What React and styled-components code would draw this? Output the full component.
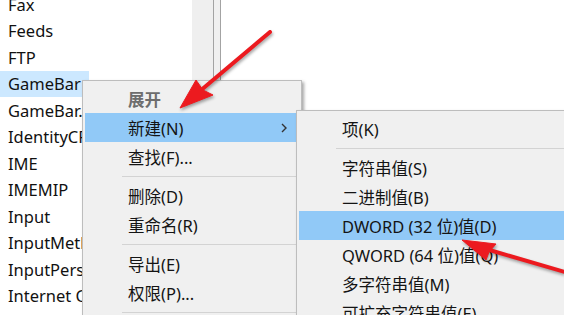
import React from "react";
import styled, { createGlobalStyle } from "styled-components";

const GlobalStyle = createGlobalStyle`
    html, body {
        margin: 0;
        padding: 0;
        background: #ffffff;
        overflow: hidden;
    }
    body {
        font-family: "Noto Sans", "Noto Sans CJK SC", sans-serif;
        font-size: 16.5px;
        color: #1b1b1b;
    }
`;

const treeItems = [
    "Fax",
    "Feeds",
    "FTP",
    "GameBar",
    "GameBar.",
    "IdentityCRL",
    "IME",
    "IMEMIP",
    "Input",
    "InputMethod",
    "InputPersonalization",
    "Internet Connection",
];

const mainMenu = [
    { label: "展开", bold: true, disabled: true },
    { label: "新建(N)", active: true, sub: true },
    { label: "查找(F)..." },
    { sep: true },
    { label: "删除(D)" },
    { label: "重命名(R)" },
    { sep: true },
    { label: "导出(E)" },
    { label: "权限(P)..." },
    { sep: true },
];

const newMenu = [
    { label: "项(K)" },
    { sep: true },
    { label: "字符串值(S)" },
    { label: "二进制值(B)" },
    { label: "DWORD (32 位)值(D)", active: true },
    { label: "QWORD (64 位)值(Q)" },
    { label: "多字符串值(M)" },
    { label: "可扩充字符串值(E)" },
];

export default function App() {
    return (
        <>
            <GlobalStyle />
            <Window>
                <TreePane>
                    <TreeList>
                        {treeItems.map((name) => (
                            <TreeRow key={name}>
                                <TreeLabel selected={name === "GameBar"}>{name}</TreeLabel>
                            </TreeRow>
                        ))}
                    </TreeList>
                </TreePane>
                <ScrollTrack />
                <Splitter />
                <ValuePane />

                <Menu left={82} top={80} width={220}>
                    <MenuBody items={mainMenu} />
                </Menu>
                <Menu left={296} top={110} width={290}>
                    <MenuBody items={newMenu} />
                </Menu>

                <Arrows viewBox="0 0 564 315">
                    <line x1="270" y1="32" x2="200" y2="91" />
                    <polygon points="180,108 196,80 203,90 213,95" />
                    <line x1="575" y1="275" x2="486" y2="249" />
                    <polygon points="462,240 496,244 489,252 486,260" />
                </Arrows>
            </Window>
        </>
    );
}

function MenuBody({ items }) {
    return items.map((item, i) =>
        item.sep ? (
            <Separator key={i} />
        ) : (
            <MenuItem key={i} active={item.active} bold={item.bold} disabled={item.disabled}>
                <span>{item.label}</span>
                {item.sub && (
                    <Chevron viewBox="0 0 6 10">
                        <path d="M1 1 L5 5 L1 9" />
                    </Chevron>
                )}
            </MenuItem>
        )
    );
}

const Window = styled.div`
    position: relative;
    display: flex;
    width: 564px;
    height: 315px;
    overflow: hidden;
    background: #ffffff;
`;

const TreePane = styled.div`
    width: 192px;
    flex-shrink: 0;
    background: #ffffff;
    overflow: hidden;
`;

const TreeList = styled.ul`
    list-style: none;
    margin: -9px 0 0 0;
    padding: 0;
`;

const TreeRow = styled.li`
    height: 26.5px;
    display: flex;
    align-items: stretch;
    white-space: nowrap;
`;

const TreeLabel = styled.span`
    display: flex;
    align-items: center;
    padding: 0 8px;
    background: ${(p) => (p.selected ? "#cce8ff" : "transparent")};
    color: #111;
`;

const ScrollTrack = styled.div`
    width: 21px;
    flex-shrink: 0;
    background: #efefef;
`;

const Splitter = styled.div`
    width: 6px;
    flex-shrink: 0;
    background: #f0f0f0;
    border-left: 1px solid #a3a3a3;
    border-right: 1px solid #a3a3a3;
`;

const ValuePane = styled.div`
    flex: 1;
    background: #ffffff;
`;

const Menu = styled.div`
    position: absolute;
    left: ${(p) => p.left}px;
    top: ${(p) => p.top}px;
    width: ${(p) => p.width}px;
    box-sizing: border-box;
    padding: 3px 2px;
    background: #f0f0f0;
    border: 1px solid #bdbdbd;
    box-shadow: 2px 2px 3px rgba(0, 0, 0, 0.35);
    display: flex;
    flex-direction: column;
`;

const MenuItem = styled.div`
    height: 29px;
    display: flex;
    align-items: center;
    justify-content: space-between;
    padding: 0 12px 0 43px;
    white-space: nowrap;
    background: ${(p) => (p.active ? "#91c9f7" : "transparent")};
    color: ${(p) => (p.disabled ? "#6d6d6d" : "#141414")};
    font-weight: ${(p) => (p.bold ? 700 : 400)};
`;

const Chevron = styled.svg`
    width: 6px;
    height: 10px;
    fill: none;
    stroke: #333;
    stroke-width: 1.4;
`;

const Separator = styled.div`
    height: 10px;
    display: flex;
    align-items: center;
    padding-left: 37px;
    &::after {
        content: "";
        flex: 1;
        height: 1px;
        background: #d3d3d3;
    }
`;

const Arrows = styled.svg`
    position: absolute;
    left: 0;
    top: 0;
    width: 564px;
    height: 315px;
    pointer-events: none;
    filter: drop-shadow(1px 2px 1.5px rgba(0, 0, 0, 0.35));
    line {
        stroke: #ec1a1f;
        stroke-width: 4;
        stroke-linecap: round;
    }
    polygon {
        fill: #ec1a1f;
        stroke: #ec1a1f;
        stroke-width: 1;
        stroke-linejoin: round;
    }
`;
